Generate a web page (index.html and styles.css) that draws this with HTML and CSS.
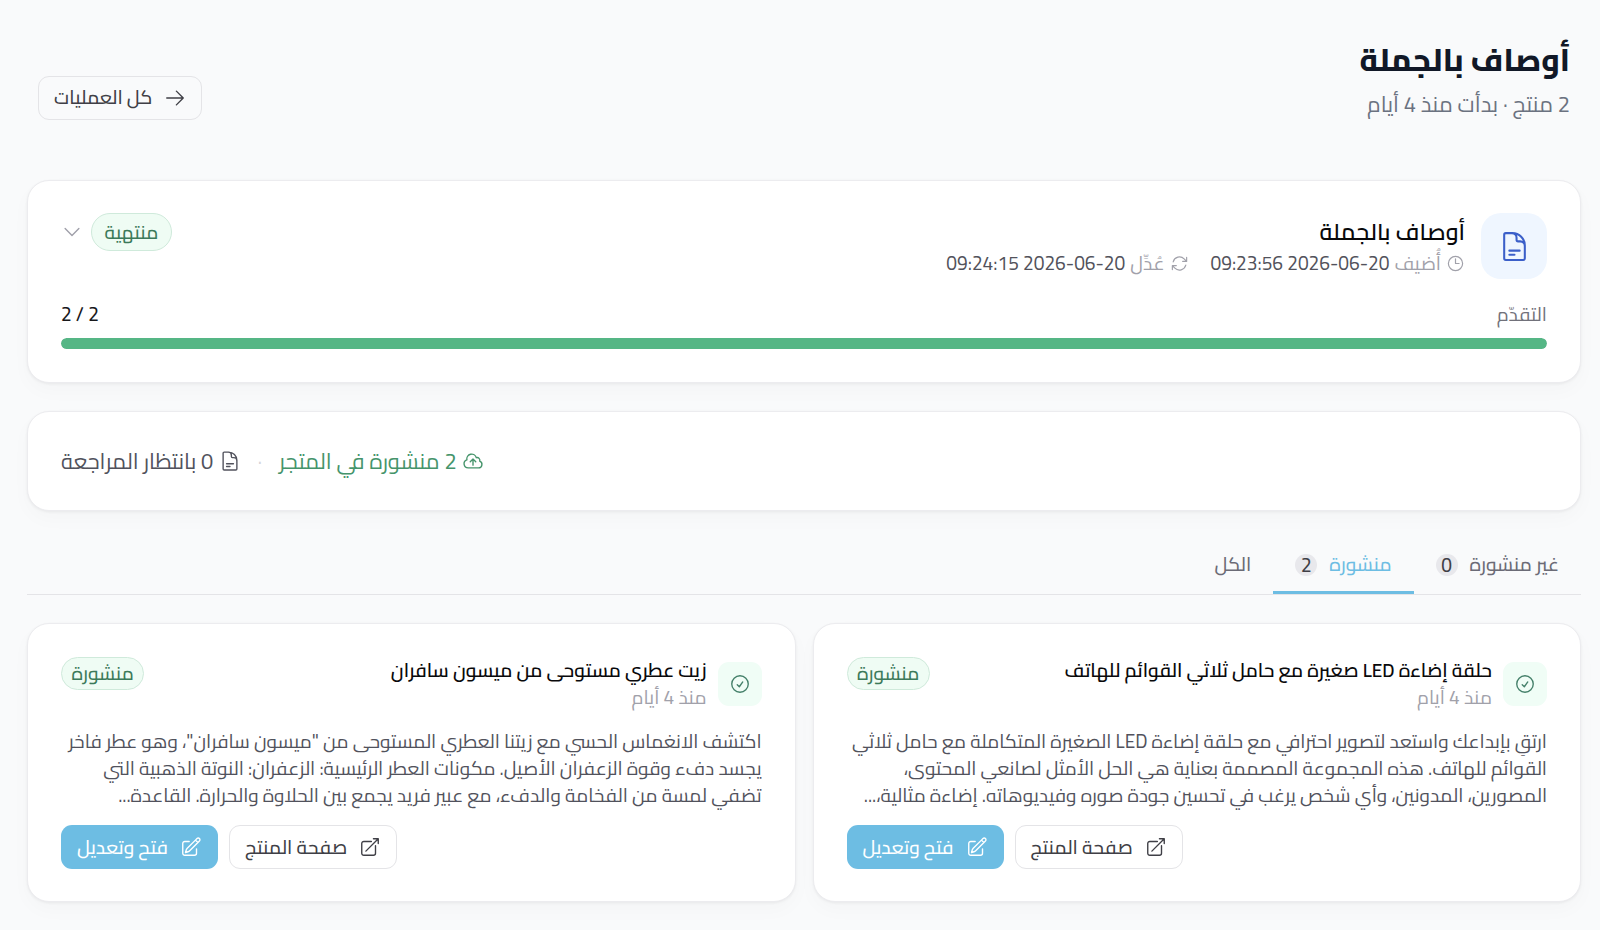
FILE: index.html
```html
<!DOCTYPE html>
<html lang="ar" dir="rtl">
<head>
<meta charset="utf-8">
<title>أوصاف بالجملة</title>
<link rel="stylesheet" href="styles.css">
</head>
<body>
<svg class="sprite" aria-hidden="true">
  <symbol id="i-doc" viewBox="0 0 24 24"><path d="M19.5 14.25v-2.625a3.375 3.375 0 0 0-3.375-3.375h-1.5A1.125 1.125 0 0 1 13.5 7.125v-1.5a3.375 3.375 0 0 0-3.375-3.375H8.25m0 12.75h7.5m-7.5 3H12M10.5 2.25H5.625c-.621 0-1.125.504-1.125 1.125v17.25c0 .621.504 1.125 1.125 1.125h12.75c.621 0 1.125-.504 1.125-1.125V11.25a9 9 0 0 0-9-9Z"/></symbol>
  <symbol id="i-arrow" viewBox="0 0 24 24"><path d="M13.5 4.5 21 12m0 0-7.5 7.5M21 12H3"/></symbol>
  <symbol id="i-chevron" viewBox="0 0 24 24"><path d="m19.5 8.25-7.5 7.5-7.5-7.5"/></symbol>
  <symbol id="i-clock" viewBox="0 0 24 24"><path d="M12 6v6h4.5m4.5 0a9 9 0 1 1-18 0 9 9 0 0 1 18 0Z"/></symbol>
  <symbol id="i-refresh" viewBox="0 0 24 24"><path d="M16.023 9.348h4.992v-.001M2.985 19.644v-4.992m0 0h4.992m-4.993 0 3.181 3.183a8.25 8.25 0 0 0 13.803-3.7M4.031 9.865a8.25 8.25 0 0 1 13.803-3.7l3.181 3.182m0-4.991v4.99"/></symbol>
  <symbol id="i-cloud" viewBox="0 0 24 24"><path d="M12 16.5V9.75m0 0 3 3m-3-3-3 3M6.75 19.5a4.5 4.5 0 0 1-1.41-8.775 5.25 5.25 0 0 1 10.233-2.33 3 3 0 0 1 3.758 3.848A3.752 3.752 0 0 1 18 19.5H6.75Z"/></symbol>
  <symbol id="i-check" viewBox="0 0 24 24"><path d="M9 12.75 11.25 15 15 9.75M21 12a9 9 0 1 1-18 0 9 9 0 0 1 18 0Z"/></symbol>
  <symbol id="i-external" viewBox="0 0 24 24"><path d="M13.5 6H5.25A2.25 2.25 0 0 0 3 8.25v10.5A2.25 2.25 0 0 0 5.25 21h10.5A2.25 2.25 0 0 0 18 18.75V10.5m-10.5 6L21 3m0 0h-5.25M21 3v5.25"/></symbol>
  <symbol id="i-edit" viewBox="0 0 24 24"><path d="m16.862 4.487 1.687-1.688a1.875 1.875 0 1 1 2.652 2.652L10.582 16.07a4.5 4.5 0 0 1-1.897 1.13L6 18l.8-2.685a4.5 4.5 0 0 1 1.13-1.897l8.932-8.931Zm0 0L19.5 7.125M18 14v4.75A2.25 2.25 0 0 1 15.75 21H5.25A2.25 2.25 0 0 1 3 18.75V8.25A2.25 2.25 0 0 1 5.25 6H10"/></symbol>
</svg>

<header class="page-header">
  <div>
    <h1 class="page-title">أوصاف بالجملة</h1>
    <p class="page-subtitle">2 منتج · بدأت منذ 4 أيام</p>
  </div>
  <a class="btn btn-outline"><svg class="icon"><use href="#i-arrow"/></svg><span>كل العمليات</span></a>
</header>

<main class="content">
  <section class="card job">
    <div class="job-head">
      <div class="job-tile"><svg class="icon"><use href="#i-doc"/></svg></div>
      <div class="job-info">
        <h2 class="job-title">أوصاف بالجملة</h2>
        <div class="job-dates">
          <div class="date"><svg class="icon"><use href="#i-clock"/></svg><span class="date-label">أُضيف</span><span class="date-value">2026-06-20 09:23:56</span></div>
          <div class="date"><svg class="icon"><use href="#i-refresh"/></svg><span class="date-label">عُدِّل</span><span class="date-value">2026-06-20 09:24:15</span></div>
        </div>
      </div>
      <div class="job-state">
        <span class="badge badge-lg">منتهية</span>
        <svg class="icon chevron"><use href="#i-chevron"/></svg>
      </div>
    </div>
    <div class="progress-row"><span>التقدّم</span><span class="progress-count">2 / 2</span></div>
    <div class="progress"><div class="progress-fill" style="width:100%"></div></div>
  </section>

  <section class="card summary">
    <div class="stat stat-green"><svg class="icon"><use href="#i-cloud"/></svg><span>2 منشورة في المتجر</span></div>
    <span class="dot">·</span>
    <div class="stat"><svg class="icon"><use href="#i-doc"/></svg><span>0 بانتظار المراجعة</span></div>
  </section>

  <nav class="tabs">
    <a class="tab"><span>غير منشورة</span><b class="count">0</b></a>
    <a class="tab tab-active"><span>منشورة</span><b class="count">2</b></a>
    <a class="tab"><span>الكل</span></a>
  </nav>

  <div class="grid">
    <article class="card product">
      <div class="product-head">
        <div class="product-tile"><svg class="icon"><use href="#i-check"/></svg></div>
        <div class="product-info">
          <h3 class="product-title">حلقة إضاءة LED صغيرة مع حامل ثلاثي القوائم للهاتف</h3>
          <p class="product-time">منذ 4 أيام</p>
        </div>
        <span class="badge">منشورة</span>
      </div>
      <p class="excerpt">ارتقِ بإبداعك واستعد لتصوير احترافي مع حلقة إضاءة LED الصغيرة المتكاملة مع حامل ثلاثي<br>القوائم للهاتف. هذه المجموعة المصممة بعناية هي الحل الأمثل لصانعي المحتوى،<br>المصورين، المدونين، وأي شخص يرغب في تحسين جودة صوره وفيديوهاته. إضاءة مثالية،...</p>
      <div class="actions">
        <a class="btn btn-outline btn-white"><svg class="icon"><use href="#i-external"/></svg><span>صفحة المنتج</span></a>
        <a class="btn btn-primary"><svg class="icon"><use href="#i-edit"/></svg><span>فتح وتعديل</span></a>
      </div>
    </article>
    <article class="card product">
      <div class="product-head">
        <div class="product-tile"><svg class="icon"><use href="#i-check"/></svg></div>
        <div class="product-info">
          <h3 class="product-title">زيت عطري مستوحى من ميسون سافران</h3>
          <p class="product-time">منذ 4 أيام</p>
        </div>
        <span class="badge">منشورة</span>
      </div>
      <p class="excerpt">اكتشف الانغماس الحسي مع زيتنا العطري المستوحى من "ميسون سافران"، وهو عطر فاخر<br>يجسد دفء وقوة الزعفران الأصيل. مكونات العطر الرئيسية: الزعفران: النوتة الذهبية التي<br>تضفي لمسة من الفخامة والدفء، مع عبير فريد يجمع بين الحلاوة والحرارة. القاعدة...</p>
      <div class="actions">
        <a class="btn btn-outline btn-white"><svg class="icon"><use href="#i-external"/></svg><span>صفحة المنتج</span></a>
        <a class="btn btn-primary"><svg class="icon"><use href="#i-edit"/></svg><span>فتح وتعديل</span></a>
      </div>
    </article>
  </div>
</main>
</body>
</html>
```
FILE: styles.css
```css
* { box-sizing: border-box; margin: 0; padding: 0; }
body {
  height: 930px;
  overflow: hidden;
  background: #f9fafb;
  color: #51525c;
  font-family: Cairo, "DejaVu Sans", sans-serif;
  font-size: 19.1px;
  line-height: 27.3px;
}
.sprite { position: absolute; width: 0; height: 0; }
.icon { display: block; flex: none; fill: none; stroke: currentColor; stroke-width: 1.5; stroke-linecap: round; stroke-linejoin: round; width: 22px; height: 22px; }

.page-header { display: flex; justify-content: space-between; align-items: flex-end; padding: 0 30px 0 38px; height: 120px; }
.page-title { margin-bottom: 6px; font-size: 31.2px; font-weight: 800; line-height: 44px; color: #111827; }
.page-subtitle { margin-bottom: -1px; font-size: 21.8px; line-height: 33px; color: #6b7280; }

.btn { display: inline-flex; align-items: center; height: 44px; padding: 0 15px; border: 1px solid transparent; border-radius: 11px; gap: 12px; font-weight: 500; white-space: nowrap; }
.btn-outline { border-color: #e4e4e7; color: #3f3f46; }
.btn-white { background: #fff; }
.btn-primary { background: #6dbde3; color: #fff; }

.content { padding: 60px 19px 0 27px; display: flex; flex-direction: column; }
.card { background: #fff; border: 1px solid #ececef; border-radius: 22px; box-shadow: 0 1px 3px rgba(0,0,0,.06), 0 8px 20px rgba(0,0,0,.025); }

.job { height: 203px; padding: 32px 33px 0; }
.job-head { display: flex; align-items: flex-start; height: 66px; }
.job-tile { width: 66px; height: 66px; border-radius: 20px; background: #eff6ff; color: #3b5fc9; display: grid; place-items: center; }
.job-tile .icon { width: 33px; height: 33px; }
.job-info { margin-right: 16px; flex: 1; }
.job-title { font-size: 23.1px; line-height: 37px; color: #09090b; font-weight: 600; }
.job-dates { display: flex; gap: 22px; }
.date { display: flex; align-items: center; gap: 5px; }
.date .icon { width: 19px; height: 19px; color: #a1a1aa; }
.date-label { color: #a1a1aa; }
.date-value { color: #52525b; }
.job-state { display: flex; align-items: center; gap: 8px; }
.badge { display: inline-flex; align-items: center; height: 33px; padding: 0 9.5px; border: 1px solid #cfeadb; border-radius: 17px; background: #effcf4; color: #3c7a5a; font-weight: 500; }
.badge-lg { height: 38px; padding: 1px 12.5px 0; border-radius: 19px; }
.chevron { color: #9f9fa9; }
.progress-row { display: flex; justify-content: space-between; margin-top: 22px; line-height: 27px; color: #71717a; }
.progress-count { color: #18181b; font-weight: 500; direction: ltr; }
.progress { height: 11px; margin-top: 10px; border-radius: 6px; background: #e4e4e7; overflow: hidden; }
.progress-fill { height: 100%; background: #55b685; border-radius: 6px; }

.summary { height: 100px; margin-top: 28px; padding: 1px 33px 0; display: flex; align-items: center; justify-content: flex-end; gap: 17px; font-size: 21.8px; }
.stat { display: flex; align-items: center; gap: 5.5px; }
.stat-green { color: #45946b; }
.dot { color: #d4d4d8; font-size: 19px; }

.tabs { display: flex; height: 58px; margin-top: 26px; border-bottom: 1px solid #e4e4e7; color: #6b6b76; }
.tab { display: flex; align-items: center; gap: 12px; padding: 2px 22px 0; height: 57px; border-bottom: 3px solid transparent; font-weight: 500; }
.tab-active { color: #6dbde3; border-color: #6dbde3; }
.count { min-width: 22px; height: 22px; border-radius: 11px; background: #e8e8ec; color: #3f3f46; font-weight: 500; line-height: 22px; text-align: center; }

.grid { display: grid; grid-template-columns: 1fr 1fr; gap: 17px; margin-top: 28px; }
.product { height: 279px; padding: 33px 33px 0; }
.product-head { display: flex; align-items: flex-start; }
.product-tile { width: 44px; height: 44px; margin-top: 5px; border-radius: 11px; background: #f0fdf6; color: #45806a; display: grid; place-items: center; }
.product-info { flex: 1; margin-right: 11px; }
.product-title { font-size: 19.05px; color: #09090b; font-weight: 600; }
.product-time { color: #a1a1aa; }
.excerpt { margin-top: 16px; font-size: 19.03px; white-space: nowrap; }
.actions { display: flex; justify-content: flex-end; gap: 11px; margin-top: 16px; }
```
